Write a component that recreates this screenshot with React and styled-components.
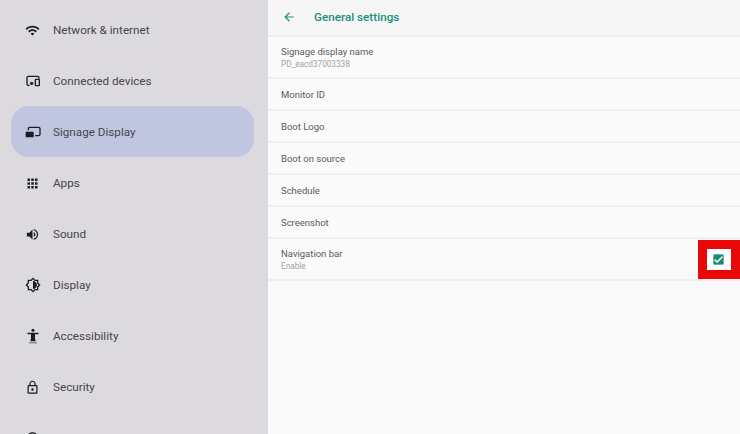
import React from 'react';
import styled, { createGlobalStyle } from 'styled-components';
import {
  MdWifi,
  MdApps,
  MdVolumeUp,
  MdOutlineBrightnessMedium,
  MdLockOutline,
  MdOutlineAccountCircle,
  MdArrowBack,
  MdCheck,
} from 'react-icons/md';

const GlobalStyle = createGlobalStyle`
  html, body {
    margin: 0;
    padding: 0;
    height: 100%;
    overflow: hidden;
    background: #fafafa;
    font-family: Roboto, "Liberation Sans", sans-serif;
  }
`;

const ConnectedIcon = () => (
  <svg width="16" height="16" viewBox="0 0 24 24" fill="none" stroke="currentColor" strokeWidth="2">
    <path d="M7 18.500H5a2 2 0 0 1-2-2V7a2 2 0 0 1 2-2h14a2 2 0 0 1 2 2v1.500" />
    <rect x="15.500" y="9.500" width="6" height="9.500" rx="1" />
    <circle cx="10" cy="15.500" r="2.500" fill="currentColor" stroke="none" />
  </svg>
);

const SignageIcon = () => (
  <svg width="16" height="16" viewBox="0 0 24 24" fill="none" stroke="currentColor" strokeWidth="2">
    <path d="M5 9.500V7a2 2 0 0 1 2-2h13.500a2 2 0 0 1 2 2v8.500a2 2 0 0 1-2 2H15" />
    <rect x="1" y="11.500" width="12" height="8.500" rx="0.500" fill="currentColor" stroke="none" />
  </svg>
);

const AccessibilityIcon = () => (
  <svg width="16" height="16" viewBox="0 0 24 24" fill="currentColor">
    <circle cx="12" cy="3.500" r="2.300" />
    <rect x="3.500" y="7" width="17" height="2.200" rx="1" />
    <path d="M9 8h6v7.500l1 4.500H8l1-4.500z" />
    <rect x="6" y="21.500" width="12" height="1.500" opacity="0.600" />
  </svg>
);

const navItems = [
  { label: 'Network & internet', icon: <MdWifi size={15} /> },
  { label: 'Connected devices', icon: <ConnectedIcon /> },
  { label: 'Signage Display', icon: <SignageIcon />, active: true },
  { label: 'Apps', icon: <MdApps size={15} /> },
  { label: 'Sound', icon: <MdVolumeUp size={15} /> },
  { label: 'Display', icon: <MdOutlineBrightnessMedium size={16} /> },
  { label: 'Accessibility', icon: <AccessibilityIcon /> },
  { label: 'Security', icon: <MdLockOutline size={15} /> },
  // only the top of this icon shows above the fold, its label is out of view
  { label: '', icon: <MdOutlineAccountCircle size={15} /> },
];

const settings = [
  { title: 'Signage display name', sub: 'PD_eacd37003338' },
  { title: 'Monitor ID' },
  { title: 'Boot Logo' },
  { title: 'Boot on source' },
  { title: 'Schedule' },
  { title: 'Screenshot' },
  { title: 'Navigation bar', sub: 'Enable', checkbox: true },
];

const App = () => (
  <Page>
    <GlobalStyle />
    <Sidebar>
      {navItems.map(({ label, icon, active }) => (
        <NavItem key={label} $active={active}>
          <IconSlot>{icon}</IconSlot>
          <span>{label}</span>
        </NavItem>
      ))}
    </Sidebar>
    <Main>
      <Header>
        <MdArrowBack size={14} />
        <h1>General settings</h1>
      </Header>
      {settings.map(({ title, sub, checkbox }) => (
        <Row key={title} $tall={!!sub}>
          <div>
            <RowTitle>{title}</RowTitle>
            {sub && <RowSub>{sub}</RowSub>}
          </div>
          {checkbox && (
            <Highlight>
              <Checkbox>
                <MdCheck size={11} />
              </Checkbox>
            </Highlight>
          )}
        </Row>
      ))}
    </Main>
  </Page>
);

export default App;

const Page = styled.div`
  display: flex;
  width: 740px;
  height: 434px;
  overflow: hidden;
`;

const Sidebar = styled.nav`
  width: 268px;
  flex-shrink: 0;
  box-sizing: border-box;
  padding: 4px 14px 0 11px;
  background: #dcdadf;
`;

const NavItem = styled.div`
  display: flex;
  align-items: center;
  gap: 12px;
  box-sizing: border-box;
  height: 51px;
  padding: 1px 0 0 13px;
  border-radius: 18px;
  background: ${(props) => (props.$active ? '#c1c6e0' : 'transparent')};
  color: #1d1c20;
  span {
    font-size: 11.7px;
    color: #47464c;
  }
`;

const IconSlot = styled.div`
  display: flex;
  align-items: center;
  justify-content: center;
  width: 17px;
  height: 17px;
`;

const Main = styled.main`
  flex: 1;
  background: #fafafa;
`;

const Header = styled.header`
  display: flex;
  align-items: center;
  gap: 18px;
  box-sizing: border-box;
  height: 37px;
  padding: 0 0 2px 14px;
  background: #f6f6f6;
  border-bottom: 2px solid #ededed;
  color: #14937f;
  h1 {
    margin: 0;
    font-size: 11.7px;
    font-weight: 500;
    color: #1a8f7d;
  }
`;

const Row = styled.div`
  display: flex;
  align-items: center;
  justify-content: space-between;
  box-sizing: border-box;
  height: ${(props) => (props.$tall ? '42px' : '32px')};
  padding: 2px 0 0 13px;
  border-bottom: 2px solid #efefef;
`;

const RowTitle = styled.div`
  font-size: 9.5px;
  line-height: 12px;
  color: #5a5a5a;
`;

const RowSub = styled.div`
  margin-top: 1px;
  font-size: 8.2px;
  line-height: 11px;
  color: #a3a3a3;
`;

const Highlight = styled.div`
  display: flex;
  align-items: center;
  justify-content: center;
  box-sizing: border-box;
  width: 42px;
  height: 39px;
  margin-top: -2px;
  padding-right: 2px;
  border: 9px solid #e80808;
  background: #ffffff;
`;

const Checkbox = styled.div`
  display: flex;
  align-items: center;
  justify-content: center;
  width: 11px;
  height: 11px;
  border-radius: 1.5px;
  background: #1a8a78;
  color: #ffffff;
  svg {
    stroke: currentColor;
    stroke-width: 1.5;
  }
`;
